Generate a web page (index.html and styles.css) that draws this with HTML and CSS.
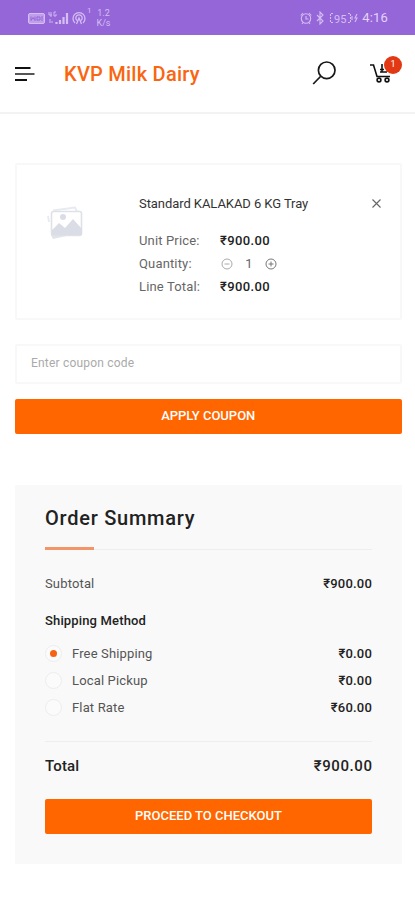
FILE: index.html
```
<!DOCTYPE html>
<html lang="en">
<head>
<meta charset="utf-8">
<title>KVP Milk Dairy</title>
<link rel="stylesheet" href="styles.css">
</head>
<body>
<div class="status">
  <svg class="status-net" width="62" height="18" viewBox="0 0 62 18" fill="none" stroke="currentColor">
    <rect x="0.5" y="4.5" width="16" height="10" rx="1.5" fill="currentColor" fill-opacity=".65"/>
    <path d="M3 7.500v4l2-3 2 3v-4M9 7.500v4M9 8h3v3H9M14 7v5" stroke="#9466d8" stroke-width="1"/>
    <path d="M21 3v3h3M23 3v5M28 3h-2v4h2V5M22 10v4M24 12v2" stroke-width=".9"/>
    <path d="M28.500 13v2M32 11v4M35.500 8v7M39 4v11" stroke-width="2.200"/>
    <path d="M47 14a6 6 0 1 1 8 0M49 11.500a3.200 3.200 0 1 1 4 0M48.500 15l2.500-6 2.500 6" stroke-width="1.300"/>
  </svg>
  <span class="hotspot">1</span>
  <span class="speed">1.2<br>K/s</span>
  <span class="spacer"></span>
  <svg width="59" height="14" viewBox="0 0 59 14" fill="none" stroke="currentColor" stroke-width="1.100">
    <circle cx="6" cy="7.500" r="4.700"/><path d="M6 5v3h2.500M.700 4.500L3 2M11.300 4.500L9 2M3 11.500l-1 1.500M9 11.500l1 1.500"/>
    <path d="M17 4l6 6-3 3V1l3 3-6 6"/>
    <path d="M33 2.500h-2.500v9H33M48 2.500h2.500v9H48" stroke-dasharray="2 1"/><path d="M52 5v4M57 3l-2 4h2l-2 4"/>
    <text class="battery" x="34" y="11.500">95</text>
  </svg>
  <span class="clock">4:16</span>
</div>
<header class="header">
  <svg width="20" height="16" viewBox="0 0 20 16" fill="none" stroke-width="2">
    <path d="M0 2h15.500M0 14h12" stroke="#111"/><path d="M0 8h19.500" stroke="#555"/>
  </svg>
  <h1 class="brand">KVP Milk Dairy</h1>
  <svg class="search" width="25" height="25" viewBox="0 0 25 25" fill="none" stroke="#171717" stroke-width="1.700">
    <circle cx="14.700" cy="9.300" r="8.300"/><path d="M8.500 15.500L1.200 23"/>
  </svg>
  <div class="cart">
    <svg width="22" height="21" viewBox="0 0 22 21" fill="none" stroke="#111" stroke-width="1.600">
      <path d="M0 2h3.500L7 13.500h13M10 6.500h4M10 9h7M12 1v8"/>
      <circle cx="9" cy="17" r="1.900"/><circle cx="17" cy="17" r="1.900"/>
    </svg>
    <span class="badge">1</span>
  </div>
</header>
<main class="page">
  <section class="item">
    <svg class="thumb" width="38" height="36" viewBox="0 0 38 36">
      <path d="M1 10l1 6M6 4.500l22-3 2 4" fill="none" stroke="#e8eaf0" stroke-width="1.800"/>
      <path d="M4 29h20L6 33z" fill="#e1e4eb"/>
      <rect x="4.500" y="5.500" width="30" height="24" rx="2" fill="#fff" stroke="#dfe1e8" stroke-width="1.600"/>
      <circle cx="16" cy="11" r="3" fill="#dadde5"/>
      <path d="M5 29v-5l7-7 6 5 8-9 9 10v6z" fill="#dadde5"/>
    </svg>
    <div class="details">
      <div class="line name-line">
        <span class="name">Standard KALAKAD 6 KG Tray</span>
        <svg width="9" height="9" viewBox="0 0 9 9" stroke="#666" stroke-width="1.100"><path d="M.500.500l8 8M8.500.500l-8 8"/></svg>
      </div>
      <div class="line"><span class="key price-key">Unit Price:</span><b class="money">₹900.00</b></div>
      <div class="line"><span class="key">Quantity:</span>
        <span class="stepper">
          <svg width="12" height="12" viewBox="0 0 12 12" fill="none" stroke="#aaa"><circle cx="6" cy="6" r="5"/><path d="M3.500 6h5"/></svg>
          <span>1</span>
          <svg width="12" height="12" viewBox="0 0 12 12" fill="none" stroke="#777"><circle cx="6" cy="6" r="5"/><path d="M3.500 6h5M6 3.500v5"/></svg>
        </span>
      </div>
      <div class="line"><span class="key">Line Total:</span><b class="money">₹900.00</b></div>
    </div>
  </section>
  <div class="coupon"><span>Enter coupon code</span></div>
  <div class="button apply">APPLY COUPON</div>
  <section class="summary">
    <h2 class="heading">Order Summary</h2>
    <div class="rule"><div class="accent"></div></div>
    <div class="row subtotal"><span>Subtotal</span><b class="money">₹900.00</b></div>
    <h3 class="method">Shipping Method</h3>
    <div class="row option"><i class="radio on"></i><span class="free">Free Shipping</span><b class="money">₹0.00</b></div>
    <div class="row option"><i class="radio"></i><span class="pickup">Local Pickup</span><b class="money">₹0.00</b></div>
    <div class="row option"><i class="radio"></i><span class="flat">Flat Rate</span><b class="money">₹60.00</b></div>
    <div class="row total"><span>Total</span><span class="sum">₹900.00</span></div>
    <div class="button checkout">PROCEED TO CHECKOUT</div>
  </section>
</main>
</body>
</html>
```
FILE: styles.css
```
* { box-sizing: border-box; }
body { margin: 0; background: #fff; color: #222; font: 13px/23px Roboto, sans-serif; }
h1, h2, h3 { margin: 0; font-weight: 500; }
svg { display: block; flex: none; }
.status { height: 35px; background: #9466d8; color: #d6bdf4; display: flex; align-items: center; padding: 0 27px 0 28px; }
.hotspot { font-size: 8px; line-height: 8px; margin: -14px 0 0 -3px; }
.speed { font-size: 9px; line-height: 10px; margin-left: 5px; text-align: center; }
.spacer { flex: 1; }
.battery { font: 11px Roboto, sans-serif; fill: currentColor; stroke: none; }
.clock { font-size: 13px; letter-spacing: .2px; margin-left: 3px; color: #e4d2fa; }
.header { height: 79px; border-bottom: 2px solid #f3f3f3; display: flex; align-items: center; padding: 0 13px 0 15px; }
.brand { color: #f96510; font-size: 20px; line-height: 24px; margin-left: 29px; letter-spacing: .25px; flex: 1; }
.search { margin-right: 33px; }
.cart { position: relative; width: 32px; height: 21px; }
.badge { position: absolute; left: 14px; top: -7px; width: 18px; height: 18px; border-radius: 50%; background: #e23914; color: #fff; font-size: 9px; line-height: 17px; text-align: center; }
.page { padding: 49px 13.500px 0 15px; }
.item { height: 157px; border: 2px solid #f8f8f8; border-radius: 2px; padding: 27px 19px 0 30px; display: flex; }
.thumb { margin: 14px 54px 0 0; }
.details { flex: 1; }
.line { display: flex; align-items: center; color: #666; letter-spacing: .15px; }
.name-line { justify-content: space-between; color: #333; letter-spacing: -.07px; margin-bottom: 14px; }
.key { width: 81px; }
.money { color: #222; font-weight: 500; letter-spacing: .38px; }
.stepper { display: flex; align-items: center; gap: 12px; padding-left: 1px; }
.stepper span { width: 8px; text-align: center; }
.coupon { margin-top: 24px; height: 40px; border: 2px solid #f8f8f8; border-radius: 2px; padding: 6px 14px; color: #aaa; font-size: 12px; letter-spacing: .2px; }
.button { background: #ff6600; color: #fff; border-radius: 2px; height: 35px; line-height: 34px; text-align: center; font-size: 13px; font-weight: 500; }
.apply { margin-top: 15px; }
.summary { margin-top: 51px; height: 379px; background: #f9f9f9; padding: 18px 29.500px 0 30px; }
.heading { font-size: 20px; line-height: 30px; letter-spacing: .75px; }
.rule { margin-top: 14px; height: 3px; border-bottom: 1px solid #eee; }
.accent { width: 49px; height: 3px; background: #f39569; }
.row { display: flex; align-items: center; justify-content: space-between; color: #555; letter-spacing: .15px; }
.summary .money { letter-spacing: .2px; }
.subtotal { margin-top: 22px; }
.method { font-size: 13px; letter-spacing: .15px; margin-top: 14px; }
.option { height: 27px; }
.method + .option { margin-top: 8px; }
.option .money { margin-left: auto; }
.radio { width: 17px; height: 17px; border: 1px solid #ededed; border-radius: 50%; background: #fbfbfb; margin-right: 10px; display: grid; place-items: center; }
.on::after { content: ""; width: 7px; height: 7px; border-radius: 50%; background: #f56212; }
.total { border-top: 1px solid #eee; margin-top: 20px; padding-top: 13px; font-size: 15px; font-weight: 500; color: #222; }
.total .sum { letter-spacing: .6px; margin-right: -.600px; }
.checkout { margin-top: 21px; }
```
